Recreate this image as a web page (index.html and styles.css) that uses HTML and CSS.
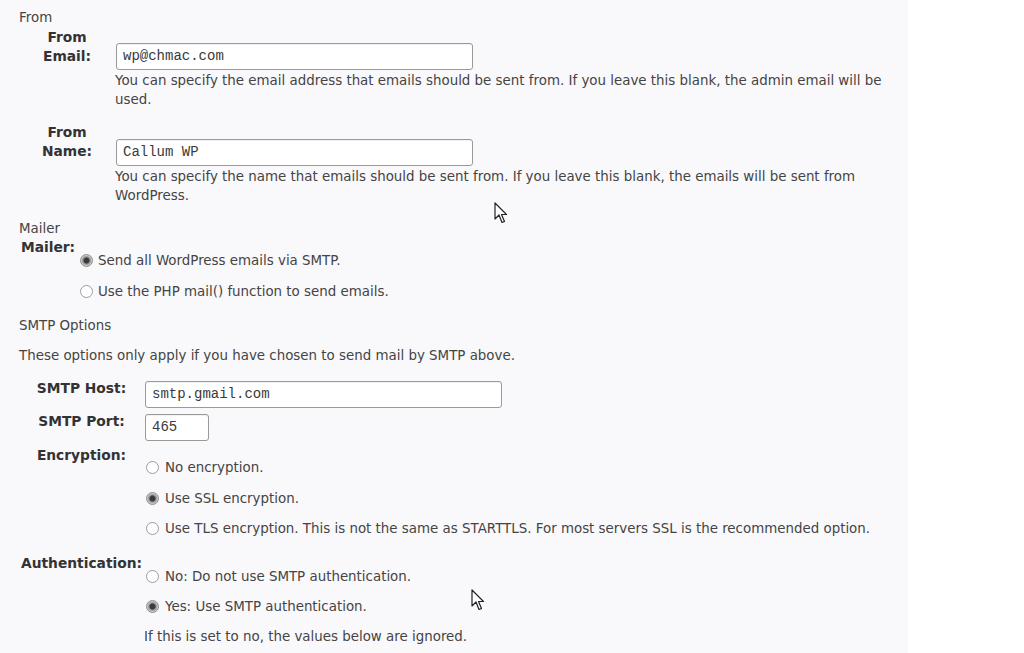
FILE: index.html
```html
<!DOCTYPE html>
<html>
<head>
<meta charset="utf-8">
<link rel="stylesheet" href="styles.css">
</head>
<body>
<div class="page">
  <h3 class="sec sec-from">From</h3>
  <div class="row row-email t1">
    <div class="th">From<br>Email:</div>
    <div class="td td-input">
      <input class="text wide" type="text" value="wp@chmac.com">
      <p class="desc">You can specify the email address that emails should be sent from. If you leave this blank, the admin email will be used.</p>
    </div>
  </div>
  <div class="row row-name t1">
    <div class="th">From<br>Name:</div>
    <div class="td td-input2">
      <input class="text wide" type="text" value="Callum WP">
      <p class="desc">You can specify the name that emails should be sent from. If you leave this blank, the emails will be sent from WordPress.</p>
    </div>
  </div>

  <h3 class="sec sec-mailer">Mailer</h3>
  <div class="row row-mailer t2">
    <div class="th">Mailer:</div>
    <div class="td td-radios">
      <label class="opt"><input type="radio" name="mailer" checked><span>Send all WordPress emails via SMTP.</span></label>
      <label class="opt"><input type="radio" name="mailer"><span>Use the PHP mail() function to send emails.</span></label>
    </div>
  </div>

  <h3 class="sec sec-smtp">SMTP Options</h3>
  <p class="intro">These options only apply if you have chosen to send mail by SMTP above.</p>
  <div class="row row-host t3">
    <div class="th">SMTP Host:</div>
    <div class="td td-field"><input class="text wide" type="text" value="smtp.gmail.com"></div>
  </div>
  <div class="row row-port t3">
    <div class="th">SMTP Port:</div>
    <div class="td td-field"><input class="text small" type="text" value="465"></div>
  </div>
  <div class="row row-enc t3">
    <div class="th">Encryption:</div>
    <div class="td td-radios">
      <label class="opt"><input type="radio" name="enc"><span>No encryption.</span></label>
      <label class="opt"><input type="radio" name="enc" checked><span>Use SSL encryption.</span></label>
      <label class="opt"><input type="radio" name="enc"><span>Use TLS encryption. This is not the same as STARTTLS. For most servers SSL is the recommended option.</span></label>
    </div>
  </div>
  <div class="row row-auth t3">
    <div class="th">Authentication:</div>
    <div class="td td-radios">
      <label class="opt"><input type="radio" name="auth"><span>No: Do not use SMTP authentication.</span></label>
      <label class="opt"><input type="radio" name="auth" checked><span>Yes: Use SMTP authentication.</span></label>
      <p class="note">If this is set to no, the values below are ignored.</p>
    </div>
  </div>

  <svg class="cursor cursor-1" width="14" height="22" viewBox="0 0 14 22"><path d="M1 1 L1 17 L5 13 L8 20.5 L10.5 19.5 L7.5 12.5 L12.5 12.5 Z" fill="#fff" stroke="#222" stroke-width="1.2" stroke-linejoin="round"/></svg>
  <svg class="cursor cursor-2" width="14" height="22" viewBox="0 0 14 22"><path d="M1 1 L1 17 L5 13 L8 20.5 L10.5 19.5 L7.5 12.5 L12.5 12.5 Z" fill="#fff" stroke="#222" stroke-width="1.2" stroke-linejoin="round"/></svg>
</div>
</body>
</html>
```

FILE: styles.css
```css
html, body {
  margin: 0;
  padding: 0;
  background: #ffffff;
}
body {
  font-family: "DejaVu Sans", Verdana, sans-serif;
  font-size: 13.4px;
  line-height: 19px;
  color: #444;
}
.page {
  position: relative;
  width: 908px;
  height: 653px;
  box-sizing: border-box;
  padding: 7.5px 15px 0 0;
  background: #f9f8fb;
  overflow: hidden;
}
.sec {
  margin: 0 0 0 19px;
  font-size: 13.4px;
  font-weight: normal;
  line-height: 19px;
  color: #444;
}
.sec-mailer { margin-top: 14px; }
.sec-smtp { margin-top: 15px; }
.intro {
  margin: 11px 0 0 19px;
}
.row {
  display: flex;
  align-items: flex-start;
}
.th {
  flex: none;
  font-weight: bold;
  font-size: 13.8px;
  text-align: center;
  color: #333;
}
.td {
  flex: 1;
  min-width: 0;
}
.t1 .th { width: 94px; margin-left: 20px; margin-right: 1px; }
.t2 .th { width: 58px; margin-left: 19px; margin-right: 1px; }
.t3 .th { width: 123px; margin-left: 20px; margin-right: 1px; }

.row-email { margin-top: 1px; }
.row-name { margin-top: 14px; }
.row-mailer { margin-top: 0; }
.row-host { margin-top: 14px; }
.row-port { margin-top: 4px; }
.row-enc { margin-top: 5px; }
.row-auth { margin-top: 16px; }

.td-input { padding-top: 15px; }
.td-input2 { padding-top: 16px; }
.td-field { padding-top: 2px; }
.td-radios { padding-top: 12.5px; }
.row-mailer .td-radios { padding-top: 13px; }

input.text {
  display: block;
  box-sizing: border-box;
  height: 27px;
  margin: 0 0 0 1px;
  padding: 0 6px;
  border: 1px solid #9a9a9a;
  border-radius: 3px;
  background: #fff;
  font-family: "Liberation Mono", "Courier New", monospace;
  font-size: 14px;
  color: #3a3a3a;
  box-shadow: inset 0 1px 1px rgba(0,0,0,0.06);
}
input.wide { width: 357px; }
input.small { width: 64px; }

.desc {
  margin: 1px 0 0 0;
}
.opt {
  display: flex;
  align-items: center;
  height: 19px;
  margin: 0;
}
.opt + .opt { margin-top: 11.5px; }
.row-mailer .opt + .opt { margin-top: 12px; }
.opt input[type=radio] {
  -webkit-appearance: none;
  appearance: none;
  flex: none;
  width: 13px;
  height: 13px;
  margin: 0 5px 0 2px;
  border: 1px solid #9d9d9d;
  border-radius: 50%;
  background: #fff;
  box-sizing: border-box;
}
.t3 .opt input[type=radio] { margin-right: 6px; }
.opt input[type=radio]:checked {
  background: radial-gradient(circle, #3a3a3a 0, #3a3a3a 2.4px, #8a8a8a 3.4px, #c4c4c4 5px, #dcdcdc 6px);
  border-color: #8e8e8e;
}
.note {
  margin: 11px 0 0 0;
}
.cursor {
  position: absolute;
}
.cursor-1 { left: 494px; top: 202px; }
.cursor-2 { left: 471px; top: 589px; }
```
